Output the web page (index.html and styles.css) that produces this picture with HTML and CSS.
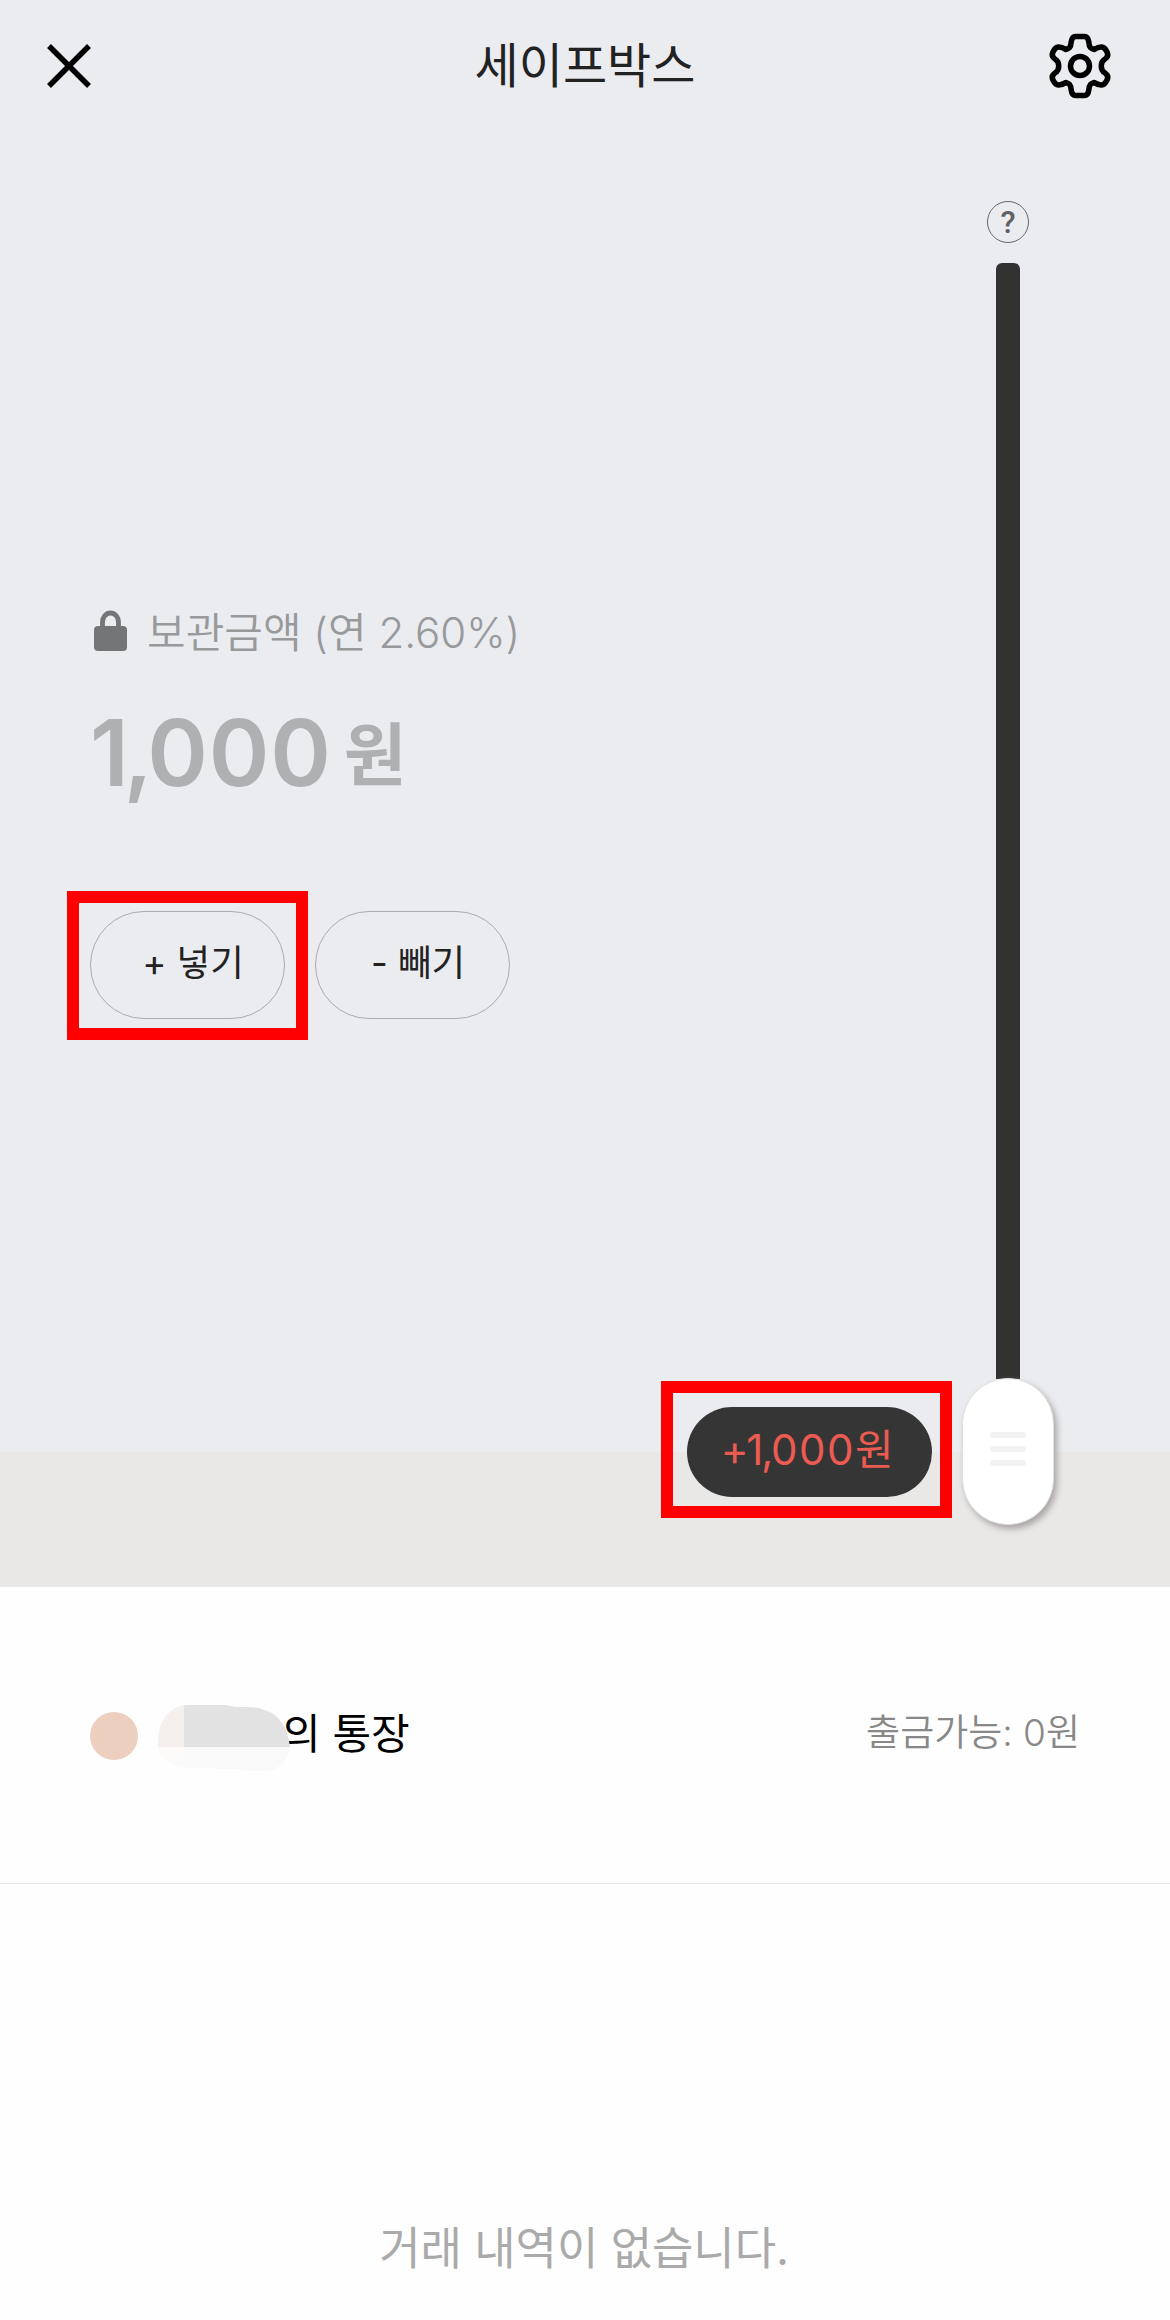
FILE: index.html
```html
<!DOCTYPE html>
<html lang="ko">
<head>
<meta charset="utf-8">
<title>세이프박스</title>
<link rel="stylesheet" href="styles.css">
</head>
<body>
<main class="screen">
  <section class="safebox">
    <header class="topbar">
      <svg class="close" viewBox="0 0 44 44" aria-label="닫기"><path d="M2 2 42 42M42 2 2 42"/></svg>
      <h1 class="title">세이프박스</h1>
      <svg class="gear" viewBox="-32 -33 64 66" aria-label="설정"><path d="M-4.500-29.500H4.500Q8-29.500 8.800-24C9.200-18 11-17.500 14-16.500C20-20 24-20 26.500-15Q29.500-10 25-7C20-4 20 4 25 7Q29.500 10 26.500 15C24 20 20 20 14 16.500C11 17.500 9.200 18 8.800 24Q8 29.500 4.500 29.500H-4.500Q-8 29.500-8.800 24C-9.200 18-11 17.500-14 16.500C-20 20-24 20-26.500 15Q-29.500 10-25 7C-20 4-20-4-25-7Q-29.500-10-26.500-15C-24-20-20-20-14-16.500C-11-17.500-9.200-18-8.800-24Q-8-29.500-4.500-29.500Z"/><circle r="9.500"/></svg>
    </header>
    <div class="content">
      <div class="details">
        <p class="label">
          <svg class="lock" viewBox="0 0 33 41"><path d="M8.500 19V12a8 9 0 0 1 16 0V19" fill="none" stroke="#747577" stroke-width="4.800"/><rect y="16" width="33" height="25" rx="4" fill="#747577"/></svg>
          <span>보관금액 (연 2.60%)</span>
        </p>
        <p class="amount"><span class="number"><span class="tight">1,</span>000</span><span class="unit">원</span></p>
        <div class="actions">
          <button class="action highlight">+ 넣기</button>
          <button class="action">- 빼기</button>
        </div>
        <div class="change highlight"><span><span class="tight">+1,</span>000원</span></div>
      </div>
      <div class="slider">
        <span class="help">?</span>
        <div class="track"></div>
        <div class="handle"><i></i><i></i><i></i></div>
      </div>
    </div>
  </section>
  <section class="account">
    <span class="dot"></span>
    <span class="owner"><svg class="mask" viewBox="0 0 134 68"><defs><clipPath id="smudge"><path d="M0 36C1 13 14 0 30 0H68L77 2H91Q101 2 106 5C120 8 130 22 132 42C130 55 121 66 108 66H91Q86 66 82 64H60L54 63H27C13 61 2 52 0 42Z"/></clipPath></defs><g clip-path="url(#smudge)"><path fill="#f5f0ee" d="M0 0H26V42H0Z"/><path fill="#e2e2e2" d="M26 0H134V42H26Z"/><path fill="#fdfbfa" d="M0 42H26V68H0Z"/><path fill="#f9f9f9" d="M26 42H134V68H26Z"/></g></svg>의 통장</span>
    <span class="available">출금가능: 0원</span>
  </section>
  <section class="history"><p>거래 내역이 없습니다.</p></section>
</main>
</body>
</html>
```

FILE: styles.css
```css
* { box-sizing: border-box; }
body { margin: 0; font-family: Inter, "Noto Sans CJK KR", sans-serif; background: #fefefe; }
p, h1 { margin: 0; font-weight: 400; }
.screen { width: 1170px; height: 2320px; display: flex; flex-direction: column; overflow: hidden; }
.safebox { height: 1587px; background: linear-gradient(#ebecf0 1452px, #e9e8e6 1452px); }
.topbar { height: 132px; padding: 0 58px 0 47px; display: grid; grid-template-columns: 64px 1fr 64px; align-items: center; }
.close { width: 44px; height: 44px; fill: none; stroke: #000; stroke-width: 5.500; }
.title { text-align: center; font-size: 48px; line-height: 60px; color: #222; padding: 0 0 1px 11px; }
.gear { width: 64px; height: 66px; fill: none; stroke: #000; stroke-width: 5.500; stroke-linejoin: round; }
.content { display: flex; justify-content: space-between; padding: 0 115px 0 90px; }
.details { width: 842px; padding-top: 467px; display: flex; flex-direction: column; }
.label { display: flex; align-items: center; height: 60px; font-size: 42px; color: #98999b; white-space: nowrap; font-weight: 350; }
.lock { width: 33px; height: 41px; margin: 2px 20px 0 4px; }
.amount { display: flex; align-items: flex-start; height: 110px; margin-top: 39px; color: #aeb0b2; font-weight: 600; line-height: 110px; }
.number { font-size: 92px; letter-spacing: 0.800px; }
.number .tight { letter-spacing: -5.500px; }
.unit { font-size: 68px; line-height: 114px; margin-left: 12px; font-weight: 700; }
.actions { display: flex; gap: 30px; margin-top: 103px; }
.action { width: 195px; height: 108px; padding: 0 0 10px 11px; border: 1px solid #a9aaad; border-radius: 54px; background: none; font-family: inherit; font-size: 36.500px; font-weight: 400; color: #222; white-space: nowrap; }
.highlight { position: relative; }
.highlight::after { content: ""; position: absolute; border: 12px solid #f00; }
.action.highlight::after { inset: -21px -24px -22px; }
.change { align-self: flex-end; margin-top: 388px; width: 245px; height: 90px; padding: 0 3px 12px 0; display: flex; align-items: center; justify-content: center; border-radius: 45px; background: #353535; color: #eb5b51; font-size: 42px; letter-spacing: 1.500px; white-space: nowrap; font-weight: 400; }
.change .tight { letter-spacing: -2.200px; }
.change.highlight::after { inset: -26px -20px -21px -26px; }
.slider { width: 93px; padding: 69px 1px 0 0; display: flex; flex-direction: column; align-items: center; }
.help { width: 42px; height: 42px; border: 1.500px solid #66676a; border-radius: 50%; display: flex; align-items: center; justify-content: center; font: 500 31px/1 Roboto, sans-serif; color: #606164; }
.track { width: 24px; height: 1116px; margin-top: 20px; border-radius: 6px 6px 0 0; background: #323232; }
.handle { width: 92px; height: 147px; margin-top: -1px; border: 1px solid #e0e0e0; border-radius: 46px; background: #fff; box-shadow: 3px 4px 6px #aaa5a5; display: flex; flex-direction: column; align-items: center; justify-content: center; gap: 8px; padding-bottom: 6px; }
.handle i { width: 36px; height: 6px; border-radius: 3px; background: #f2f2f2; }
.account { height: 297px; padding: 0 90px; display: flex; align-items: center; border-bottom: 1px solid #e6e6e6; }
.dot { width: 48px; height: 48px; border-radius: 50%; background: #edcfc0; margin-top: 1px; }
.owner { position: relative; margin: 0 0 9px 144px; font-size: 42px; color: #000; white-space: nowrap; }
.mask { position: absolute; left: -124px; top: 5px; width: 134px; height: 68px; }
.available { margin: 0 0 10px auto; font-size: 37px; color: #888; font-weight: 350; }
.history { flex: 1; padding: 335px 2px 0 0; text-align: center; font-size: 45px; line-height: 60px; letter-spacing: -0.100px; color: #aaa; }
```
